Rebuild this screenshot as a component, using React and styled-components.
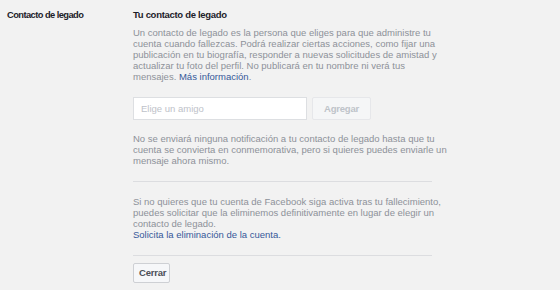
import styled, { createGlobalStyle } from "styled-components";

const Global = createGlobalStyle`
    body {
        margin: 0;
        background: #f2f2f2;
        font-family: "Liberation Sans", Arial, sans-serif;
    }
`;

const Page = styled.div`
    display: flex;
    padding: 9px 0 0 7px;
    height: 281px;
`;

const Label = styled.div`
    width: 126px;
    flex-shrink: 0;
    font-size: 9.3px;
    font-weight: bold;
    letter-spacing: -0.55px;
    color: #1d2129;
    line-height: 12px;
`;

const Content = styled.div`
    width: 299px;
`;

const Title = styled.h3`
    margin: 0 0 6px;
    font-size: 9.5px;
    letter-spacing: -0.3px;
    line-height: 12px;
    color: #1d2129;
`;

const Text = styled.p`
    margin: 0;
    font-size: 9.5px;
    line-height: 11px;
    color: #8d9199;
    white-space: nowrap;
`;

const A = styled.a`
    color: #365899;
    text-decoration: none;
`;

const Form = styled.div`
    display: flex;
    gap: 5px;
    margin: 15px 0 13px;
`;

const Input = styled.input`
    box-sizing: border-box;
    width: 174px;
    height: 23px;
    border: 1px solid #dddfe2;
    background: #fff;
    padding: 0 7px;
    font-family: inherit;
    font-size: 9.5px;
    outline: none;

    &::placeholder {
        color: #bec2c9;
    }
`;

const Button = styled.button`
    box-sizing: border-box;
    height: ${(p) => (p.$small ? "20px" : "23px")};
    padding: 0 ${(p) => (p.$small ? "5px" : "10px")};
    width: ${(p) => (p.$small ? "37px" : "59px")};
    border: 1px solid ${(p) => (p.disabled ? "#e6e7ea" : "#ced0d4")};
    border-radius: 2px;
    background: ${(p) => (p.disabled ? "#f5f6f7" : "#f6f7f9")};
    color: ${(p) => (p.disabled ? "#bec3c9" : "#4b4f56")};
    font-family: inherit;
    font-size: 9.5px;
    letter-spacing: -0.2px;
    font-weight: bold;
`;

const Hr = styled.hr`
    border: none;
    border-top: 1px solid #dcdde0;
    margin: ${(p) => p.$m || "15px 0 14px"};
`;

function App() {
    return (
        <>
            <Global />
            <Page>
                <Label>Contacto de legado</Label>
                <Content>
                    <Title>Tu contacto de legado</Title>
                    <Text>
                        Un contacto de legado es la persona que eliges para que administre tu
                        <br />
                        cuenta cuando fallezcas. Podrá realizar ciertas acciones, como fijar una
                        <br />
                        publicación en tu biografía, responder a nuevas solicitudes de amistad y
                        <br />
                        actualizar tu foto del perfil. No publicará en tu nombre ni verá tus
                        <br />
                        mensajes. <A href="#">Más información</A>.
                    </Text>
                    <Form>
                        <Input placeholder="Elige un amigo" />
                        <Button disabled>Agregar</Button>
                    </Form>
                    <Text>
                        No se enviará ninguna notificación a tu contacto de legado hasta que tu
                        <br />
                        cuenta se convierta en conmemorativa, pero si quieres puedes enviarle un
                        <br />
                        mensaje ahora mismo.
                    </Text>
                    <Hr />
                    <Text>
                        Si no quieres que tu cuenta de Facebook siga activa tras tu fallecimiento,
                        <br />
                        puedes solicitar que la eliminemos definitivamente en lugar de elegir un
                        <br />
                        contacto de legado.
                        <br />
                        <A href="#">Solicita la eliminación de la cuenta.</A>
                    </Text>
                    <Hr $m="15px 0 6px" />
                    <Button $small>Cerrar</Button>
                </Content>
            </Page>
        </>
    );
}

export default App;
